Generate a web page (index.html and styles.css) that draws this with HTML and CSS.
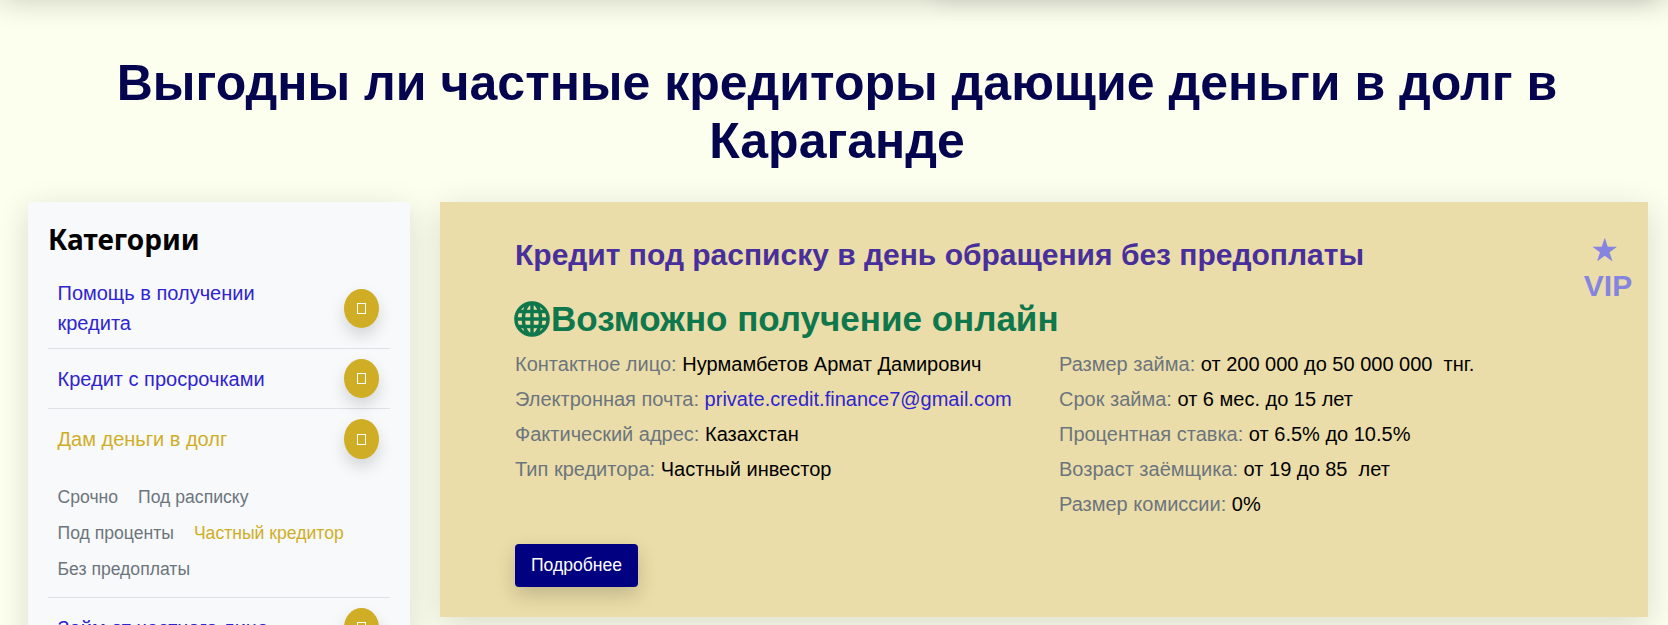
FILE: index.html
```html
<!DOCTYPE html>
<html lang="ru">
<head>
<meta charset="utf-8">
<title>Выгодны ли частные кредиторы</title>
<link rel="stylesheet" href="styles.css">
</head>
<body>
<header class="topbar"><div class="topbar-nav"></div></header>
<h1 class="page-title">Выгодны ли частные кредиторы дающие деньги в долг в Караганде</h1>
<div class="layout">
  <aside class="sidebar">
    <h2 class="sidebar-title">Категории</h2>
    <ul class="cat-list">
      <li class="cat-item">
        <div class="cat-row"><a class="cat-link cat-link-wide" href="#">Помощь в получении кредита</a><span class="cat-btn"><span class="tofu"></span></span></div>
      </li>
      <li class="cat-item">
        <div class="cat-row"><a class="cat-link" href="#">Кредит с просрочками</a><span class="cat-btn"><span class="tofu"></span></span></div>
      </li>
      <li class="cat-item">
        <div class="cat-row"><a class="cat-link active" href="#">Дам деньги в долг</a><span class="cat-btn cat-btn-open"><span class="tofu"></span></span></div>
        <div class="sub-list">
          <a class="sub-link" href="#">Срочно</a>
          <a class="sub-link" href="#">Под расписку</a>
          <a class="sub-link" href="#">Под проценты</a>
          <a class="sub-link active" href="#">Частный кредитор</a>
          <a class="sub-link" href="#">Без предоплаты</a>
        </div>
      </li>
      <li class="cat-item">
        <div class="cat-row"><a class="cat-link" href="#">Займ от частного лица</a><span class="cat-btn"><span class="tofu"></span></span></div>
      </li>
    </ul>
  </aside>
  <main class="main">
    <article class="offer">
      <div class="vip"><span class="vip-star">★</span><span class="vip-text">VIP</span></div>
      <h3 class="offer-title">Кредит под расписку в день обращения без предоплаты</h3>
      <div class="online">
        <svg class="globe" viewBox="-.4 -.4 16.8 16.8" fill="currentColor" stroke="currentColor" stroke-width="0.6" aria-hidden="true"><path d="M0 8a8 8 0 1 1 16 0A8 8 0 0 1 0 8zm7.5-6.923c-.67.204-1.335.82-1.887 1.855A7.97 7.97 0 0 0 5.145 4H7.5V1.077zM4.09 4a9.267 9.267 0 0 1 .64-1.539 6.7 6.7 0 0 1 .597-.933A7.025 7.025 0 0 0 2.255 4H4.09zm-.582 3.5c.03-.877.138-1.718.312-2.5H1.674a6.958 6.958 0 0 0-.656 2.5h2.49zM4.847 5a12.5 12.5 0 0 0-.338 2.5H7.5V5H4.847zM8.5 5v2.5h2.99a12.495 12.495 0 0 0-.337-2.5H8.5zM4.51 8.5a12.5 12.5 0 0 0 .337 2.5H7.5V8.5H4.51zm3.99 0V11h2.653c.187-.765.306-1.608.338-2.5H8.5zM5.145 12c.138.386.295.744.468 1.068.552 1.035 1.218 1.65 1.887 1.855V12H5.145zm.182 2.472a6.696 6.696 0 0 1-.597-.933A9.268 9.268 0 0 1 4.09 12H2.255a7.024 7.024 0 0 0 3.072 2.472zM3.82 11a13.652 13.652 0 0 1-.312-2.5h-2.49c.062.89.291 1.733.656 2.5H3.82zm6.853 3.472A7.024 7.024 0 0 0 13.745 12H11.91a9.27 9.27 0 0 1-.64 1.539 6.688 6.688 0 0 1-.597.933zM8.5 12v2.923c.67-.204 1.335-.82 1.887-1.855.173-.324.33-.682.468-1.068H8.5zm3.68-1h2.146c.365-.767.594-1.61.656-2.5h-2.49a13.65 13.65 0 0 1-.312 2.5zm2.802-3.5a6.959 6.959 0 0 0-.656-2.5H12.18c.174.782.282 1.623.312 2.5h2.49zM11.27 2.461c.247.464.462.98.64 1.539h1.835a7.024 7.024 0 0 0-3.072-2.472c.218.284.418.598.597.933zM10.855 4a7.966 7.966 0 0 0-.468-1.068C9.835 1.897 9.17 1.282 8.5 1.077V4h2.355z"/></svg>
        <span>Возможно получение онлайн</span>
      </div>
      <div class="details">
        <div class="detail-col detail-col-left">
          <p class="detail"><span class="label">Контактное лицо:</span> Нурмамбетов Армат Дамирович</p>
          <p class="detail"><span class="label">Электронная почта:</span> <a class="mail" href="#">private.credit.finance7@gmail.com</a></p>
          <p class="detail"><span class="label">Фактический адрес:</span> Казахстан</p>
          <p class="detail"><span class="label">Тип кредитора:</span> Частный инвестор</p>
        </div>
        <div class="detail-col">
          <p class="detail"><span class="label">Размер займа:</span> от 200 000 до 50 000 000&nbsp; тнг.</p>
          <p class="detail"><span class="label">Срок займа:</span> от 6 мес. до 15 лет</p>
          <p class="detail"><span class="label">Процентная ставка:</span> от 6.5% до 10.5%</p>
          <p class="detail"><span class="label">Возраст заёмщика:</span> от 19 до 85&nbsp; лет</p>
          <p class="detail"><span class="label">Размер комиссии:</span> 0%</p>
        </div>
      </div>
      <a class="more" href="#">Подробнее</a>
    </article>
  </main>
</div>
</body>
</html>
```
FILE: styles.css
```css
* { box-sizing: border-box; }
html, body { height: 100vh; overflow: hidden; }
body {
  margin: 0;
  background: #fdffee;
  color: #000;
  font-family: "Liberation Sans", Arial, sans-serif;
}
.topbar {
  height: 60px;
  margin-top: -60px;
  display: flex;
  justify-content: flex-end;
  padding-right: 16px;
  box-shadow: 0 0 30px rgba(0, 0, 0, .22);
}
.topbar-nav {
  width: 716px;
  height: 60px;
  box-shadow: 0 0 24px rgba(0, 0, 0, .1);
}
.page-title {
  margin: 0;
  padding: 54px 60px 32px 66px;
  text-align: center;
  font-size: 50px;
  line-height: 58px;
  font-weight: 700;
  color: #05054f;
}
.layout {
  display: flex;
  align-items: flex-start;
  padding-left: 28px;
  padding-right: 20px;
  gap: 30px;
}
.sidebar {
  flex: 0 0 382px;
  background: #f8f9fa;
  padding: 20px 20px 20px;
  box-shadow: 0 8px 32px rgba(0, 0, 0, .15);
  border-radius: 4px 4px 0 0;
}
.sidebar-title {
  margin: -1px 0 11px;
  font-family: "Noto Sans", "Open Sans", sans-serif;
  font-size: 28px;
  line-height: 36px;
  font-weight: 700;
  color: #000;
}
.cat-list { list-style: none; margin: 0; padding: 0; }
.cat-item { border-bottom: 1px solid #dee2e6; }
.cat-item:last-child { border-bottom: 0; }
.cat-row {
  display: flex;
  align-items: center;
  justify-content: space-between;
  padding: 10px 11px 10px 9.5px;
}
.cat-link {
  color: #2f24d0;
  font-size: 20px;
  line-height: 30px;
  text-decoration: none;
}
.cat-link-wide { max-width: 240px; }
.cat-link.active { color: #cfae26; }
.cat-btn {
  flex: none;
  display: flex;
  align-items: center;
  justify-content: center;
  width: 35px;
  height: 39px;
  border-radius: 50%;
  background: #cfae26;
  box-shadow: 0 8px 16px rgba(0, 0, 0, .15);
}
.cat-btn-open { height: 40px; }
.tofu {
  display: block;
  width: 9px;
  height: 11px;
  border: 1px solid #fff;
}
.sub-list {
  display: flex;
  flex-wrap: wrap;
  column-gap: 20px;
  padding: 10px 40px 10px 9.5px;
}
.sub-link {
  color: #6c757d;
  font-size: 17.6px;
  line-height: 36px;
  text-decoration: none;
}
.sub-link.active { color: #cfae26; }
.main { flex: 1 1 auto; min-width: 0; }
.offer {
  position: relative;
  background: #ebdda9;
  padding: 36px 30px 30px 75px;
  height: 415px;
  box-shadow: 0 8px 32px rgba(0, 0, 0, .15);
}
.vip {
  position: absolute;
  top: 30px;
  right: 16px;
  width: 48px;
  display: flex;
  flex-direction: column;
  align-items: center;
  color: #8585e0;
  font-weight: 700;
}
.vip-star { font-family: "DejaVu Sans", sans-serif; font-size: 32px; line-height: 36px; margin-right: 7px; }
.vip-text { font-size: 30px; line-height: 36px; }
.offer-title {
  margin: 0;
  font-size: 30px;
  line-height: 34px;
  font-weight: 700;
  color: #482f9b;
}
.online {
  display: flex;
  align-items: center;
  gap: 1px;
  margin-top: 27px;
  margin-bottom: 8px;
  margin-left: -1px;
  font-size: 35px;
  line-height: 40px;
  font-weight: 700;
  color: #0f774c;
}
.globe { width: 36px; height: 36px; flex: none; }
.details { display: flex; }
.detail-col-left { flex: 0 0 544px; }
.detail { margin: 0; font-size: 20px; line-height: 35px; color: #000; }
.label { color: #6c757d; }
.mail { color: #2f24d0; text-decoration: none; }
.more {
  display: inline-block;
  margin-top: 22px;
  width: 123px;
  height: 43px;
  line-height: 43px;
  text-align: center;
  font-size: 17.6px;
  color: #fff;
  background: #000080;
  border-radius: 4px;
  text-decoration: none;
  box-shadow: 0 8px 20px rgba(0, 0, 0, .18);
}
```
